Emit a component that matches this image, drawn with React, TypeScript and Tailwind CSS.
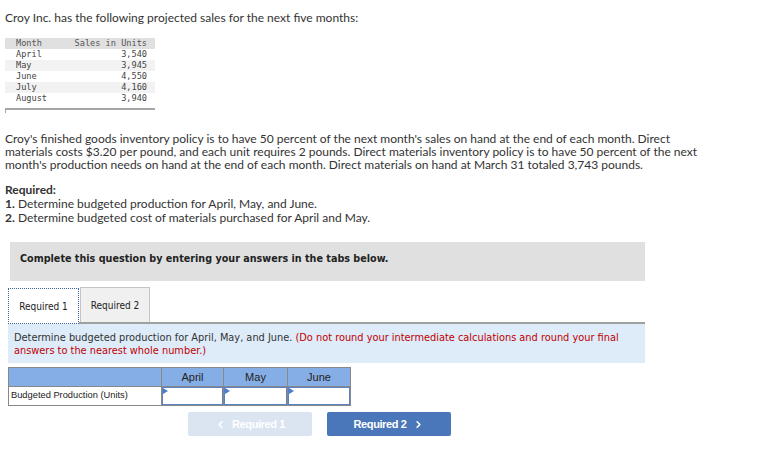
import { ChevronLeft, ChevronRight } from "lucide-react"

const sales = [
  { month: "April", units: "3,540" },
  { month: "May", units: "3,945" },
  { month: "June", units: "4,550" },
  { month: "July", units: "4,160" },
  { month: "August", units: "3,940" },
]

const tahoma = "font-['DejaVu_Sans_Condensed','DejaVu_Sans',sans-serif]"

function AnswerInput() {
  return (
    <div className="relative h-[18px] bg-white border-[1.5px] border-[#5a82c4]">
      <div className="absolute top-0 left-0 w-0 h-0 border-y-[3px] border-y-transparent border-l-[5px] border-l-[#4f7cc4]" />
    </div>
  )
}

export default function App() {
  return (
    <div className="w-[771px] h-[451px] bg-white text-[#333] font-['Lato',sans-serif] pt-[11px] overflow-hidden">
      {/* Intro */}
      <p className="pl-[5px] text-[12px] leading-[14px]">
        Croy Inc. has the following projected sales for the next five months:
      </p>

      {/* Sales table */}
      <div className="ml-[5px] mt-[13px] w-[150px] font-['DejaVu_Sans_Mono',monospace] text-[8.6px]">
        <div className="flex h-[11px] items-center bg-[#e0e0e0] text-[#555] pl-[11px] pr-[8px]">
          <span className="flex-1">Month</span>
          <span>Sales in Units</span>
        </div>
        {sales.map((row, i) => (
          <div
            key={row.month}
            className={`flex h-[11px] items-center pl-[11px] pr-[8px] text-[#444] ${i % 2 === 1 ? "bg-[#f2f2f2]" : "bg-white"}`}
          >
            <span className="flex-1">{row.month}</span>
            <span>{row.units}</span>
          </div>
        ))}
        <div className="mt-[4px] h-[5px] border-t-2 border-l border-[#a6a6a6]" />
      </div>

      {/* Policy paragraph */}
      <div className="pl-[5px] mt-[19px] text-[12px] leading-[13px] whitespace-nowrap">
        <p>Croy's finished goods inventory policy is to have 50 percent of the next month's sales on hand at the end of each month. Direct</p>
        <p>materials costs $3.20 per pound, and each unit requires 2 pounds. Direct materials inventory policy is to have 50 percent of the next</p>
        <p>month's production needs on hand at the end of each month. Direct materials on hand at March 31 totaled 3,743 pounds.</p>
      </div>

      <div className="pl-[5px] mt-[12px] text-[12px] leading-[14px]">
        <p className="font-bold">Required:</p>
        <p><span className="font-bold">1.</span> Determine budgeted production for April, May, and June.</p>
        <p><span className="font-bold">2.</span> Determine budgeted cost of materials purchased for April and May.</p>
      </div>

      {/* Instruction bar */}
      <div className={`ml-[10px] mt-[17px] w-[635px] h-[39px] bg-[#e0e0e0] pl-[10px] pt-[10px] text-[10.7px] leading-[14px] font-bold text-[#222] ${tahoma}`}>
        Complete this question by entering your answers in the tabs below.
      </div>

      {/* Tabs */}
      <div className={`ml-[8px] mt-[6px] w-[637px] flex items-end border-b-2 border-[#a0a0a0] text-[10px] text-[#222] ${tahoma}`}>
        <div className="w-[71px] h-[36px] -mb-[2px] flex items-center justify-center bg-white border border-dotted border-[#3b5fa8]">
          Required 1
        </div>
        <div className="ml-[1px] w-[70px] h-[35px] flex items-center justify-center bg-[#f0f0f0] border border-b-0 border-[#c4c4c4]">
          Required 2
        </div>
      </div>

      {/* Tab panel */}
      <div className={`ml-[8px] w-[637px] bg-[#deebf9] pl-[6px] pt-[7px] pb-[6px] text-[10.9px] leading-[13px] text-[#333] ${tahoma}`}>
        <p className="whitespace-nowrap">
          Determine budgeted production for April, May, and June.{" "}
          <span className="text-[#c00000]">(Do not round your intermediate calculations and round your final</span>
        </p>
        <p className="text-[#c00000]">answers to the nearest whole number.)</p>
      </div>

      {/* Answer table */}
      <table className="ml-[8px] mt-[4px] border-collapse font-['Liberation_Sans',Arial,sans-serif] text-[11px] text-[#222]">
        <thead>
          <tr className="h-[19px] bg-[#86aee6]">
            <th className="w-[153px] border border-[#888]" />
            <th className="w-[62px] border border-[#888] font-normal">April</th>
            <th className="w-[64px] border border-[#888] font-normal">May</th>
            <th className="w-[63px] border border-[#888] font-normal">June</th>
          </tr>
        </thead>
        <tbody>
          <tr className="h-[19px]">
            <td className="border border-[#888] pl-[2px] text-[9.3px] text-left">Budgeted Production (Units)</td>
            <td className="border border-[#888] p-0"><AnswerInput /></td>
            <td className="border border-[#888] p-0"><AnswerInput /></td>
            <td className="border border-[#888] p-0"><AnswerInput /></td>
          </tr>
        </tbody>
      </table>

      {/* Navigation */}
      <div className="ml-[188px] mt-[6px] flex gap-[15px] font-['Liberation_Sans',Arial,sans-serif] text-[11px] font-bold text-white">
        <div className="w-[124px] h-[24px] rounded-[2px] bg-[#dbe4f1] flex items-center justify-center gap-[6px] tracking-[-0.4px]">
          <ChevronLeft className="w-[11px] h-[11px]" strokeWidth={3.5} />
          Required 1
        </div>
        <div className="w-[124px] h-[24px] rounded-[2px] bg-[#4a76ba] flex items-center justify-center gap-[7px] tracking-[-0.4px]">
          Required 2
          <ChevronRight className="w-[11px] h-[11px]" strokeWidth={3.5} />
        </div>
      </div>
    </div>
  )
}
